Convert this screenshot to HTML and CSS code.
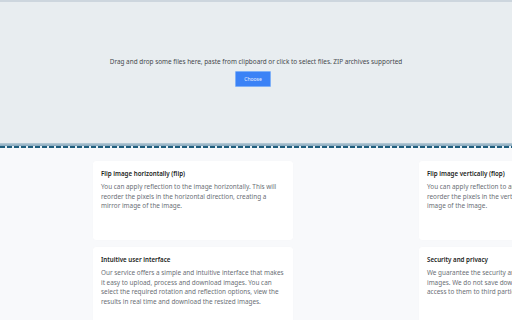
FILE: index.html
```html
<!DOCTYPE html>
<html lang="en">
<head>
<meta charset="utf-8">
<title>Flip image</title>
<link rel="stylesheet" href="styles.css">
</head>
<body>
<section class="dropzone">
  <p class="drop-text">Drag and drop some files here, paste from clipboard or click to select files. ZIP archives supported</p>
  <button class="choose" type="button">Choose</button>
</section>
<div class="edge"></div>
<main class="features">
  <article class="card">
    <h3 class="card-title">Flip image horizontally (flip)</h3>
    <p class="card-text">You can apply reflection to the image horizontally. This will reorder the pixels in the horizontal direction, creating a mirror image of the image.</p>
  </article>
  <article class="card">
    <h3 class="card-title">Flip image vertically (flop)</h3>
    <p class="card-text">You can apply reflection to an image vertically. This will reorder the pixels in the vertical direction, creating a mirror image of the image.</p>
  </article>
  <article class="card">
    <h3 class="card-title">Intuitive user interface</h3>
    <p class="card-text">Our service offers a simple and intuitive interface that makes it easy to upload, process and download images. You can select the required rotation and reflection options, view the results in real time and download the resized images.</p>
  </article>
  <article class="card">
    <h3 class="card-title">Security and privacy</h3>
    <p class="card-text">We guarantee the security and confidentiality of all your images. We do not save downloaded files and do not provide access to them to third parties.</p>
  </article>
</main>
</body>
</html>
```

FILE: styles.css
```css
html, body {
  margin: 0;
  padding: 0;
}
body {
  background: #f8f9fb;
  font-family: "Noto Sans", "Open Sans", sans-serif;
  width: 512px;
  height: 320px;
  overflow: hidden;
}
.dropzone {
  box-sizing: border-box;
  height: 143px;
  background: #e8edf0;
  border-top: 2px solid #cdd6de;
  display: flex;
  flex-direction: column;
  align-items: center;
  justify-content: center;
  gap: 4px;
  padding-bottom: 2px;
}
.drop-text {
  margin: 0;
  font-size: 6.4px;
  line-height: 10px;
  font-weight: 400;
  color: #45494d;
}
.choose {
  width: 36px;
  height: 16px;
  padding: 0;
  margin-right: 6px;
  background: #3b82f6;
  border: 1px solid #7fb0f7;
  border-radius: 1px;
  color: #e8f0ff;
  font-family: "Noto Sans", sans-serif;
  font-size: 5px;
}
.edge {
  height: 5px;
  background:
    repeating-linear-gradient(90deg, #1f5e7e 0 5px, #e8f1f6 5px 7px) bottom / 100% 2px no-repeat,
    linear-gradient(#b9ccd8, #5f8da8);
}
.features {
  display: grid;
  grid-template-columns: 200px 200px;
  column-gap: 126px;
  row-gap: 7px;
  padding: 13px 0 0 93px;
  font-family: "Noto Sans", "Inter", sans-serif;
}
.card {
  background: #ffffff;
  border-radius: 3px;
  min-height: 79px;
  box-sizing: border-box;
  padding: 8px 7.5px 8px 8px;
  box-shadow: 0 0 1px rgba(0, 0, 0, 0.04);
}
.card-title {
  margin: 0 0 3px;
  font-size: 6.2px;
  line-height: 10px;
  font-weight: 600;
  color: #1a1d21;
}
.card-text {
  margin: 0;
  font-size: 6.4px;
  line-height: 9.7px;
  color: #6b6f76;
}
```
